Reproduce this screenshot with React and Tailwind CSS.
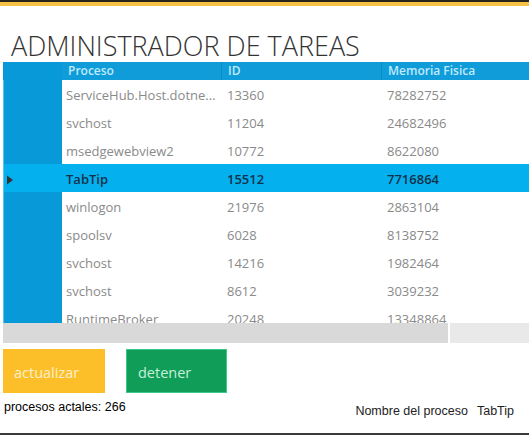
import React from "react";

const rows = [
  ["ServiceHub.Host.dotne...", "13360", "78282752"],
  ["svchost", "11204", "24682496"],
  ["msedgewebview2", "10772", "8622080"],
  ["TabTip", "15512", "7716864", true],
  ["winlogon", "21976", "2863104"],
  ["spoolsv", "6028", "8138752"],
  ["svchost", "14216", "1982464"],
  ["svchost", "8612", "3039232"],
  ["RuntimeBroker", "20248", "13348864"],
];

export default function App() {
  return (
    <div className="w-[529px] h-[435px] bg-white overflow-hidden flex flex-col" style={{ fontFamily: '"Open Sans", sans-serif' }}>
      <div className="h-[2px] bg-[#2b2519] shrink-0" />
      <div className="h-[4px] bg-[#f5c244] shrink-0" />
      <div className="h-[56px] shrink-0 pl-[11px] pt-[21px] text-[27px] leading-[37px] font-light text-[#333] whitespace-nowrap">
        ADMINISTRADOR DE TAREAS
      </div>
      <div className="ml-[3px] h-[281px] shrink-0 flex flex-col overflow-hidden">
        <div className="flex h-[18px] shrink-0 bg-[#109cd9] text-[12px] leading-[16px] font-semibold text-[#bfeafd]">
          <div className="w-[59px] shrink-0 bg-[#0799d8]" />
          <div className="w-[160px] shrink-0 pl-[6px] pt-[1px] border-r border-[#0a8cc6]">Proceso</div>
          <div className="w-[160px] shrink-0 pl-[6px] pt-[1px] border-r border-[#0a8cc6]">ID</div>
          <div className="flex-1 pl-[6px] pt-[1px]">Memoria Fisica</div>
        </div>
        <div className="flex h-[243px] shrink-0 overflow-hidden">
          <div className="w-[59px] shrink-0 bg-[#0799d8] border-l border-[#5cc3ee] flex flex-col">
            {rows.map((r, i) => (
              <div key={i} className={`h-[28px] shrink-0 flex items-center pl-[2px] pt-[3px] ${r[3] ? "bg-[#05b0ee]" : ""}`}>
                {r[3] && (
                  <svg width="8" height="10" viewBox="0 0 8 10">
                    <path d="M1 0.5 L7 5 L1 9.5 Z" fill="#333" />
                  </svg>
                )}
              </div>
            ))}
          </div>
          <div className="flex-1 flex flex-col">
            {rows.map((r, i) => (
              <div
                key={i}
                className={`h-[28px] shrink-0 flex items-center pt-[4px] text-[13px] ${
                  r[3] ? "bg-[#05b0ee] text-[#13324a] font-semibold" : "bg-white text-[#8a8a8a]"
                }`}
              >
                <div className="w-[160px] shrink-0 pl-[4px] whitespace-nowrap overflow-hidden">{r[0]}</div>
                <div className="w-[160px] shrink-0 pl-[5px]">{r[1]}</div>
                <div className="flex-1 pl-[5px]">{r[2]}</div>
              </div>
            ))}
          </div>
        </div>
        <div className="flex h-[20px] shrink-0">
          <div className="w-[445px] shrink-0 bg-[#d9d9d9]" />
          <div className="w-[2px] shrink-0 bg-white" />
          <div className="flex-1 bg-[#e9e9e9]" />
        </div>
      </div>
      <div className="flex mt-[6px] ml-[3px] gap-[21px] shrink-0">
        <div className="w-[102px] h-[44px] bg-[#fcbf2a] text-[#fdf0c8] text-[14.5px] flex items-center pl-[11px] pt-[4px]">actualizar</div>
        <div className="w-[101px] h-[44px] bg-[#0f9d58] text-[#c9efd9] text-[14.5px] flex items-center pl-[11px] pt-[4px] border border-[#3cc98c]">detener</div>
      </div>
      <div className="flex shrink-0 ml-[4px] mt-[6px] text-[12.5px] text-black" style={{ fontFamily: '"Liberation Sans", sans-serif' }}>
        <div className="leading-[16px]">procesos actales: 266</div>
        <div className="ml-auto mr-[15px] mt-[4px] leading-[16px] text-[#222] flex gap-[9px]">
          <span>Nombre del proceso</span>
          <span>TabTip</span>
        </div>
      </div>
      <div className="flex-1" />
      <div className="h-[2px] bg-[#3a3a3a] shrink-0" />
    </div>
  );
}
